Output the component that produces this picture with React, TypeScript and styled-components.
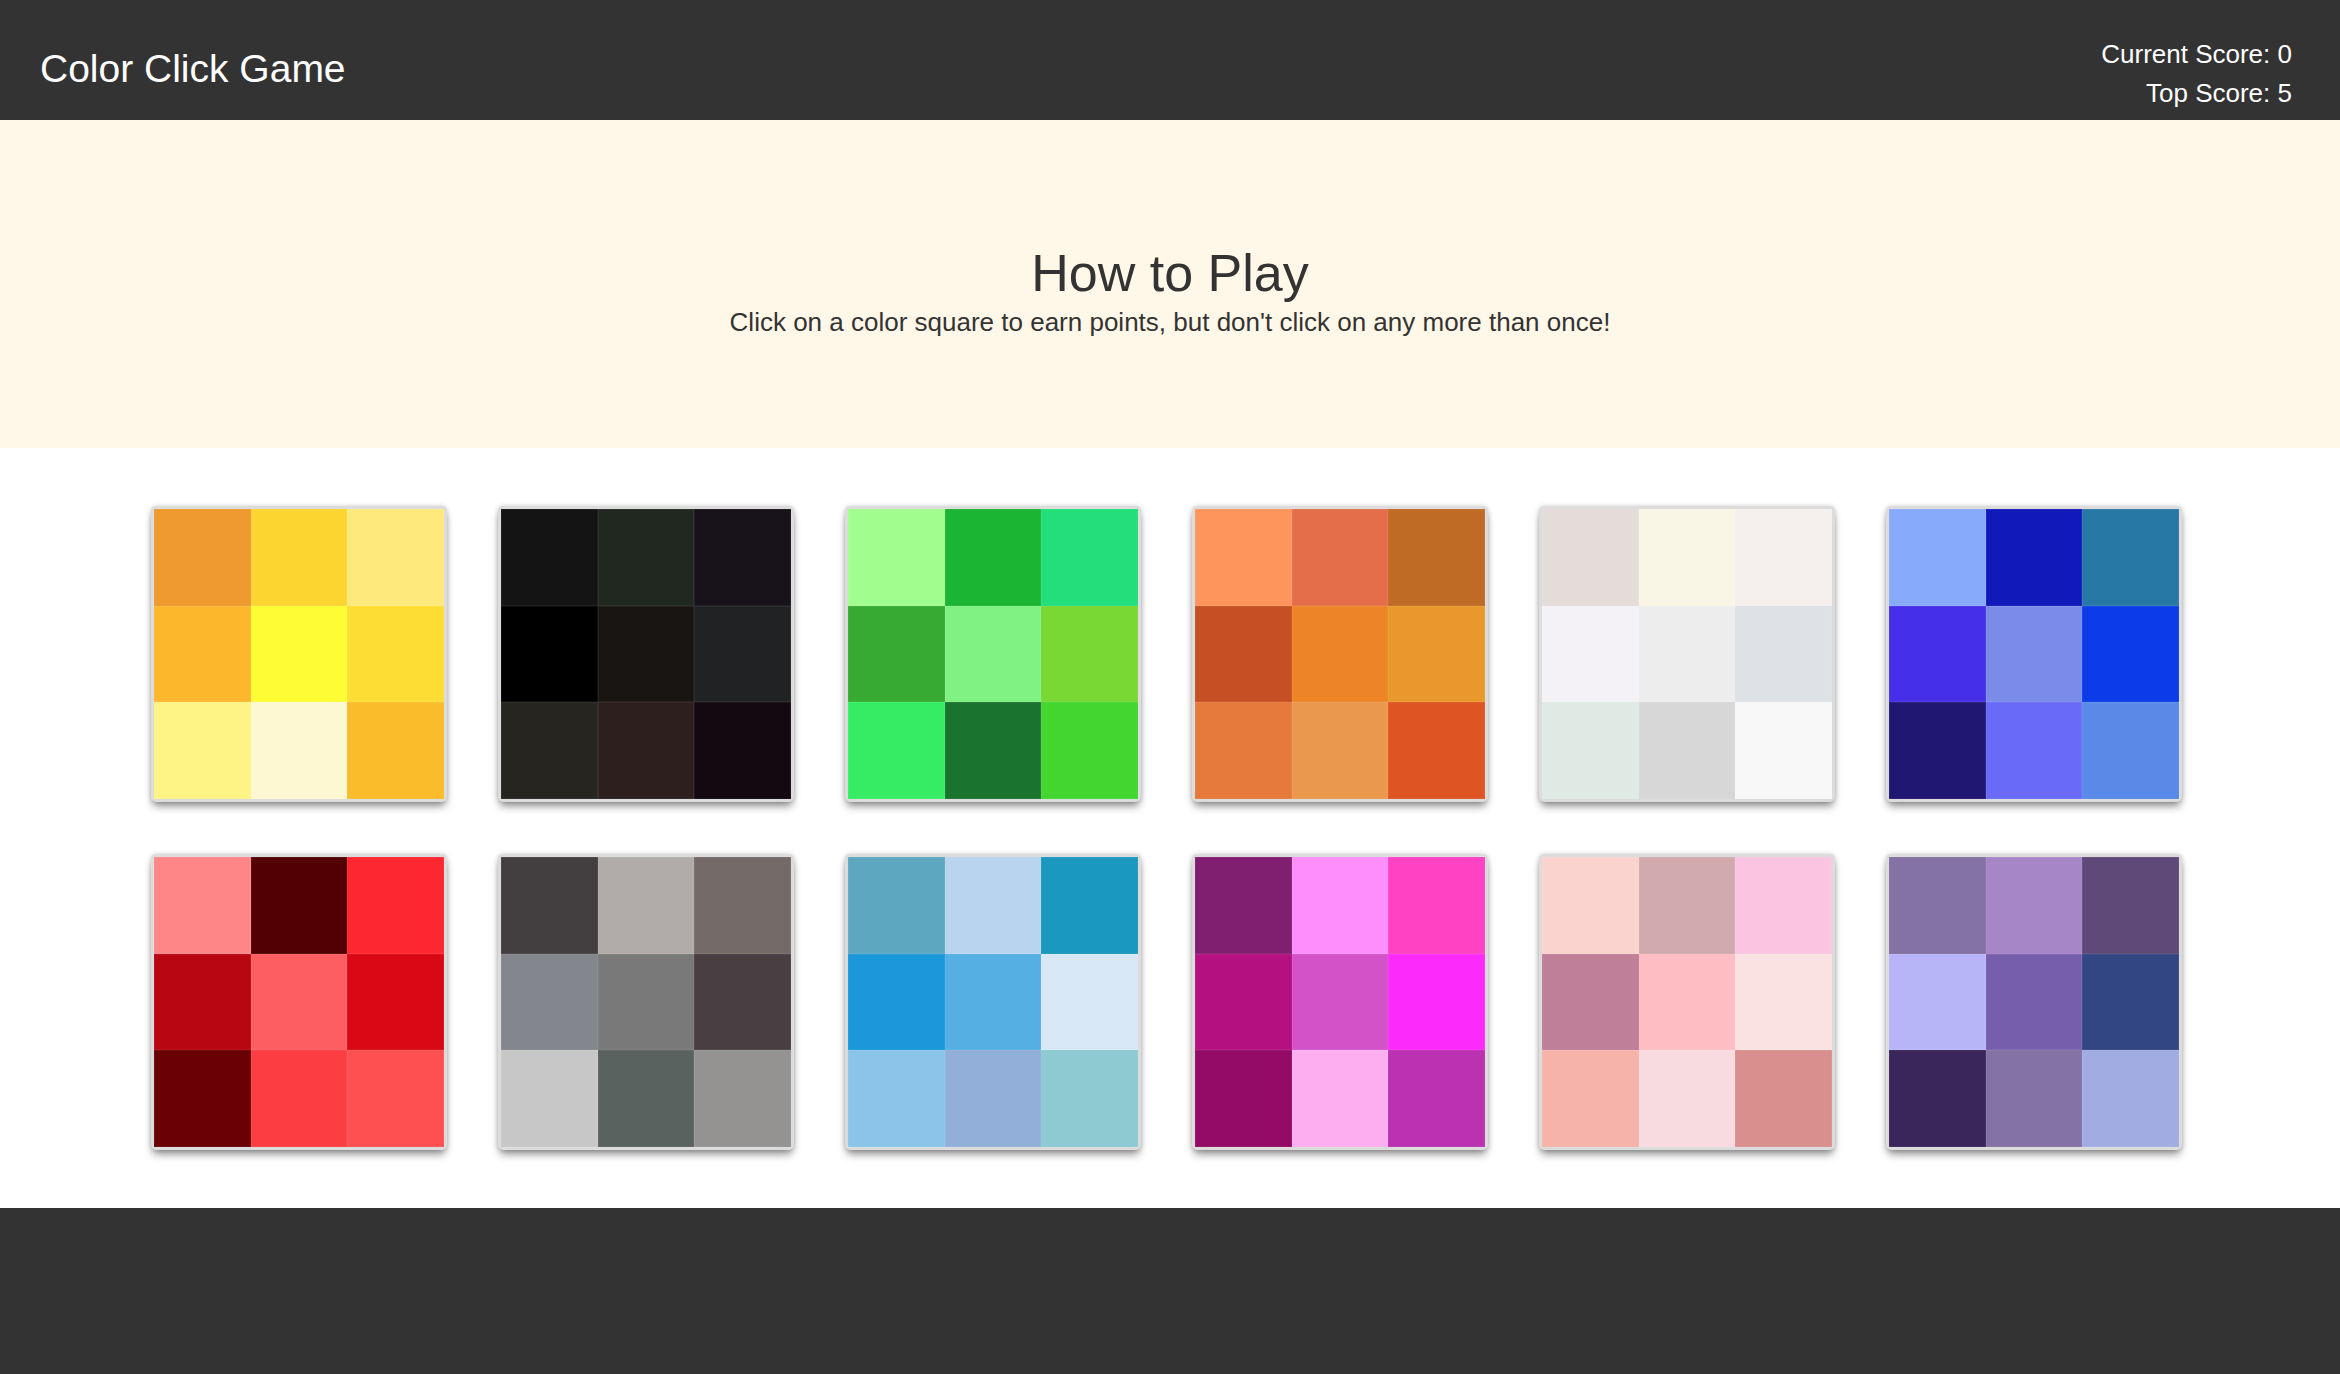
import React from "react";
import styled, { createGlobalStyle } from "styled-components";

const GlobalStyle = createGlobalStyle`
  html, body {
    margin: 0;
    padding: 0;
    background: #ffffff;
    font-family: "Liberation Sans", Arial, Helvetica, sans-serif;
  }
  * { box-sizing: border-box; }
`;

const Page = styled.div`
  display: flex;
  flex-direction: column;
  width: 100%;
`;

const Header = styled.header`
  display: flex;
  justify-content: space-between;
  align-items: flex-start;
  height: 120px;
  padding: 0 48px 0 40px;
  background: #333333;
  color: #ffffff;
`;

const Brand = styled.div`
  margin-top: 46px;
  font-size: 39px;
  line-height: 46px;
  color: #ffffff;
`;

const Scores = styled.div`
  margin-top: 35px;
  display: flex;
  flex-direction: column;
  align-items: flex-end;
  font-size: 26px;
  line-height: 39px;
`;

const Hero = styled.section`
  height: 328px;
  padding-top: 123px;
  background: #fff7e7;
  color: #333333;
  text-align: center;
`;

const HeroTitle = styled.h1`
  margin: 0;
  font-size: 52px;
  font-weight: 400;
  line-height: 60px;
`;

const HeroText = styled.p`
  margin: 5px 0 0;
  font-size: 26px;
  line-height: 28px;
`;

const Board = styled.main`
  display: grid;
  grid-template-columns: repeat(6, 296px);
  column-gap: 51px;
  row-gap: 52px;
  padding: 58px 0 58px 151px;
  background: #ffffff;
`;

const Card = styled.button`
  width: 296px;
  height: 296px;
  padding: 3px;
  border: none;
  border-radius: 5px;
  background: #dcdcdc;
  box-shadow: 0 6px 9px -2px rgba(0, 0, 0, 0.45), 0 0 5px rgba(0, 0, 0, 0.18);
  cursor: pointer;
`;

const Swatch = styled.div`
  display: grid;
  grid-template-columns: repeat(3, 1fr);
  grid-template-rows: repeat(3, 1fr);
  width: 290px;
  height: 290px;
  overflow: hidden;
`;

const Tile = styled.div<{ $c: string }>`
  background: ${(p) => p.$c};
  box-shadow: inset 0 0 0 0.5px rgba(255, 255, 255, 0.12);
`;

const Footer = styled.footer`
  height: 166px;
  background: #333333;
`;

const palettes: string[][] = [
  ["#EE9A2E", "#FDD531", "#FEE97C", "#FDB72D", "#FEFC34", "#FDDD33", "#FEF385", "#FEF8D2", "#FBBC2C"],
  ["#141414", "#202820", "#18121A", "#000000", "#181512", "#212224", "#262520", "#2C1F1E", "#130910"],
  ["#A1FD8D", "#1BB533", "#23DF7B", "#37AA31", "#80F283", "#79D833", "#36EC64", "#1A7430", "#42D62F"],
  ["#FE955C", "#E56E4A", "#BF6B25", "#C64F23", "#ED8528", "#E9992B", "#E67A3D", "#EB984F", "#DE5523"],
  ["#E4DCD9", "#F9F6E6", "#F5F0EE", "#F4F2F7", "#EDEDED", "#DEE1E6", "#E0EAE4", "#D7D7D7", "#F8F8F8"],
  ["#88AAFA", "#1219BA", "#2878A6", "#462FE8", "#7A8CE7", "#0B3CE8", "#201773", "#696BF8", "#598AE8"],
  ["#FF8686", "#520003", "#FD272F", "#B80612", "#FD5E61", "#D80814", "#6A0005", "#FC3D42", "#FE4F51"],
  ["#433F40", "#B1ACA9", "#746A67", "#84868E", "#797979", "#493E42", "#C7C7C7", "#5A6260", "#949392"],
  ["#5DA7C1", "#B9D4EE", "#1A98BD", "#1A98DA", "#55AFE3", "#D8E8F6", "#8AC5E9", "#91AFD8", "#8DCAD2"],
  ["#801E70", "#FD8EFC", "#FF42C4", "#B41080", "#D352C8", "#FC2AFB", "#930B65", "#FDAEF1", "#BA31B1"],
  ["#FAD3CF", "#D1AAAE", "#FBC5E1", "#C07F99", "#FEBCC3", "#FAE2E2", "#F5B3A9", "#F7DBE0", "#D98F8E"],
  ["#8372A3", "#A786C8", "#5F4979", "#B7B5F8", "#775EAD", "#314683", "#3A265B", "#8372A3", "#A0ACE2"],
];

export default function App() {
  const [score, setScore] = React.useState(0);
  const [top, setTop] = React.useState(5);
  const [clicked, setClicked] = React.useState<number[]>([]);

  const handleClick = (i: number) => {
    if (clicked.includes(i)) {
      setScore(0);
      setClicked([]);
      return;
    }
    const next = score + 1;
    setScore(next);
    if (next > top) setTop(next);
    setClicked([...clicked, i]);
  };

  return (
    <Page>
      <GlobalStyle />
      <Header>
        <Brand>Color Click Game</Brand>
        <Scores>
          <span>Current Score: {score}</span>
          <span>Top Score: {top}</span>
        </Scores>
      </Header>
      <Hero>
        <HeroTitle>How to Play</HeroTitle>
        <HeroText>Click on a color square to earn points, but don't click on any more than once!</HeroText>
      </Hero>
      <Board>
        {palettes.map((tiles, i) => (
          <Card key={i} onClick={() => handleClick(i)} aria-label={`color square ${i + 1}`}>
            <Swatch>
              {tiles.map((c, j) => (
                <Tile key={j} $c={c} />
              ))}
            </Swatch>
          </Card>
        ))}
      </Board>
      <Footer />
    </Page>
  );
}
